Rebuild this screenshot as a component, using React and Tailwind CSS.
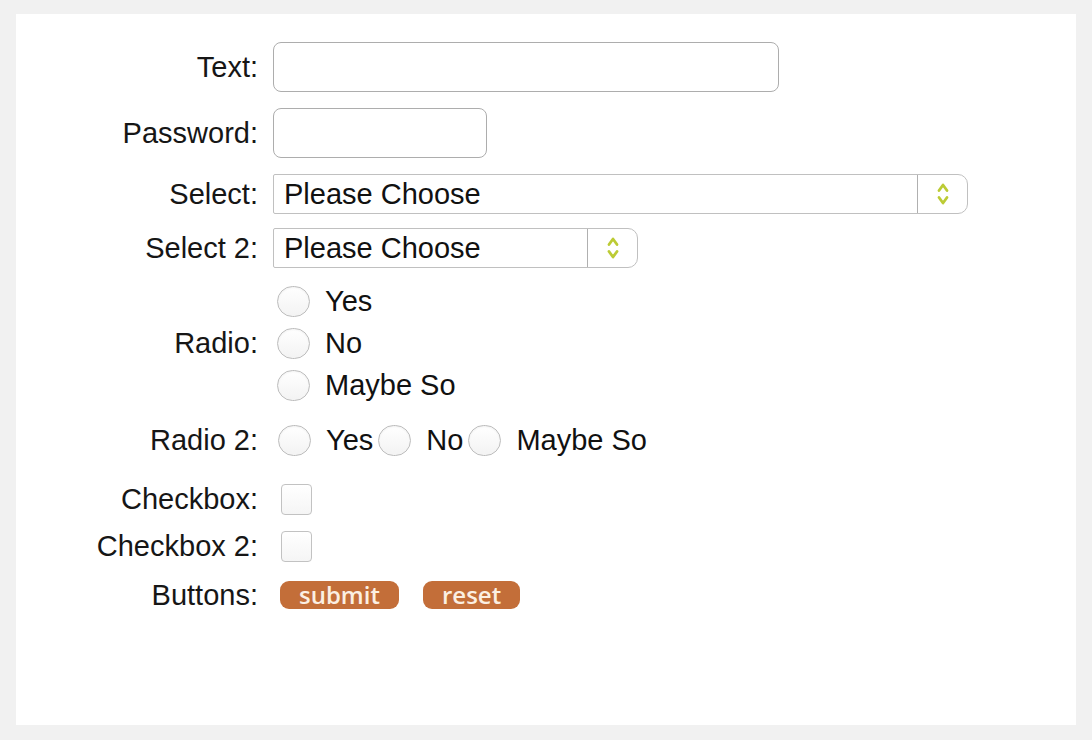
import React from "react";

const font = { fontFamily: '"Liberation Sans", Arial, sans-serif' };

function Arrows() {
  return (
    <svg width="12" height="26" viewBox="0 0 12 26" fill="none">
      <path d="M2 9.5 L6 4 L10 9.5" stroke="#bccb35" strokeWidth="2.8" strokeLinecap="round" strokeLinejoin="round" />
      <path d="M2 16.5 L6 22 L10 16.5" stroke="#bccb35" strokeWidth="2.8" strokeLinecap="round" strokeLinejoin="round" />
    </svg>
  );
}

function Select({ width }) {
  return (
    <div className={`flex h-[40px] items-stretch rounded-l-[2px] rounded-r-[10px] border border-[#c0c0c0] bg-white ${width}`}>
      <div className="flex flex-1 items-center pl-[10px] text-[29px] leading-none text-[#111]">Please Choose</div>
      <div className="flex w-[50px] items-center justify-center border-l border-[#b0b0b0]">
        <Arrows />
      </div>
    </div>
  );
}

function Radio() {
  return (
    <span className="block h-[31px] w-[33px] shrink-0 rounded-full border border-[#bdbdbd] bg-gradient-to-b from-white to-[#f3f3f3] shadow-[inset_0_1px_2px_rgba(0,0,0,0.06)]" />
  );
}

function RadioItem({ label }) {
  return (
    <div className="flex items-center">
      <Radio />
      <span className="ml-[15px] text-[29px] leading-none text-[#111]">{label}</span>
    </div>
  );
}

function Checkbox() {
  return (
    <span className="ml-[8px] block h-[31px] w-[31px] rounded-[4px] border border-[#c2c2c2] bg-gradient-to-b from-white to-[#f5f5f5]" />
  );
}

function Row({ label, className = "", children }) {
  return (
    <div className={`flex items-center ${className}`}>
      <div className="w-[242px] shrink-0 text-right text-[29px] leading-none text-[#161616]">{label}</div>
      <div className="ml-[15px] flex items-center">{children}</div>
    </div>
  );
}

function Button({ children }) {
  return (
    <button
      className="flex h-[28px] items-center rounded-[9px] bg-[#c36e39] px-[19px] text-[24px] font-semibold leading-none text-[#fbefe2]"
      style={{ fontFamily: '"Open Sans", "DejaVu Sans", sans-serif' }}
    >
      {children}
    </button>
  );
}

export default function App() {
  return (
    <div className="h-[740px] w-[1092px] bg-[#f1f1f1] px-[16px] pt-[14px]" style={font}>
      <div className="h-[711px] w-[1060px] bg-white pt-[28px]">
        <Row label="Text:" className="h-[50px]">
          <div className="h-[50px] w-[506px] rounded-[8px] border-[1.5px] border-[#adadad] bg-white" />
        </Row>
        <Row label="Password:" className="mt-[16px] h-[50px]">
          <div className="h-[50px] w-[214px] rounded-[8px] border-[1.5px] border-[#adadad] bg-white" />
        </Row>
        <Row label="Select:" className="mt-[16px] h-[40px]">
          <Select width="w-[695px]" />
        </Row>
        <Row label="Select 2:" className="mt-[14px] h-[40px]">
          <Select width="w-[365px]" />
        </Row>
        <Row label="Radio:" className="mt-[12px]">
          <div className="ml-[4px] flex flex-col">
            <div className="flex h-[42px] items-center"><RadioItem label="Yes" /></div>
            <div className="flex h-[42px] items-center"><RadioItem label="No" /></div>
            <div className="flex h-[42px] items-center"><RadioItem label="Maybe So" /></div>
          </div>
        </Row>
        <Row label="Radio 2:" className="mt-[14px] h-[40px]">
          <div className="ml-[5px] flex items-center gap-[5px]">
            <RadioItem label="Yes" />
            <RadioItem label="No" />
            <RadioItem label="Maybe So" />
          </div>
        </Row>
        <Row label="Checkbox:" className="mt-[24px] h-[31px]">
          <Checkbox />
        </Row>
        <Row label="Checkbox 2:" className="mt-[16px] h-[31px]">
          <Checkbox />
        </Row>
        <Row label="Buttons:" className="mt-[19px] h-[28px]">
          <div className="ml-[7px] flex items-center gap-[24px]">
            <Button>submit</Button>
            <Button>reset</Button>
          </div>
        </Row>
      </div>
    </div>
  );
}
